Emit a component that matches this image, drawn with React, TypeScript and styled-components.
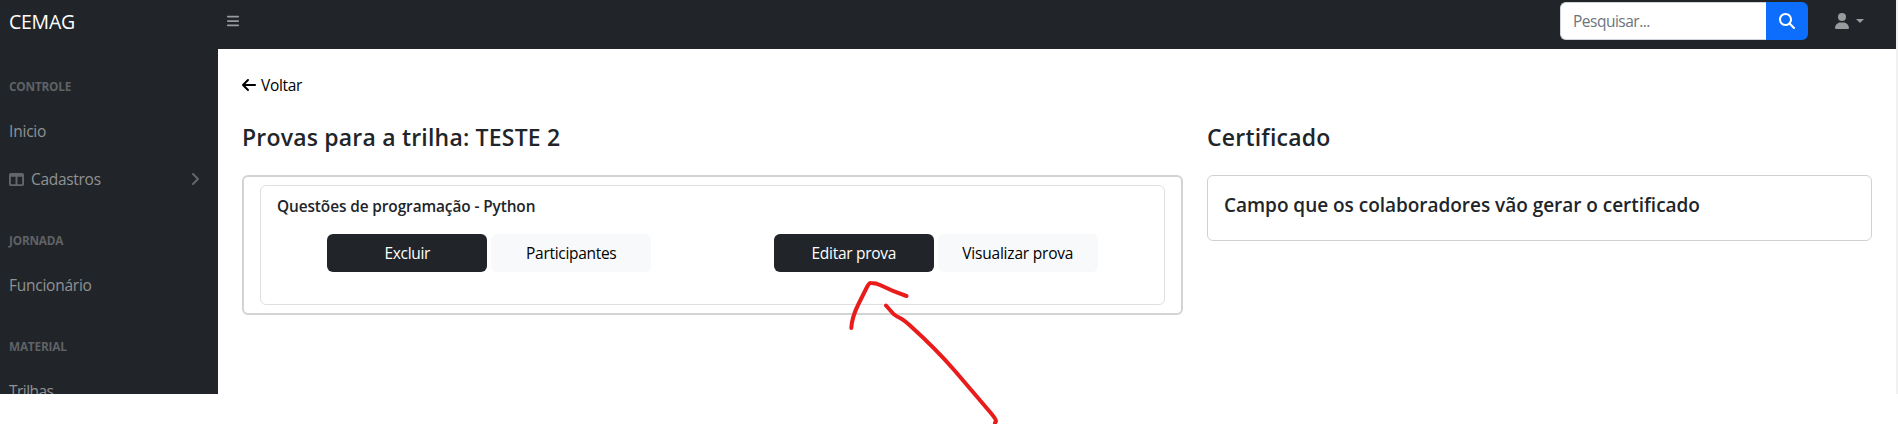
import React from "react";
import styled, { createGlobalStyle } from "styled-components";
import { FaArrowLeft, FaBars, FaTableColumns, FaAngleRight, FaMagnifyingGlass, FaUser } from "react-icons/fa6";

const GlobalStyle = createGlobalStyle`
  *, *::before, *::after { box-sizing: border-box; }
  body {
    margin: 0;
    background: #fff;
    color: #212529;
    font-family: "Open Sans", "Noto Sans", sans-serif;
    font-size: 15.5px;
    line-height: 24px;
    overflow: hidden;
  }
`;

const Page = styled.div`
  position: relative;
  height: 424px;
  overflow: hidden;
`;
const Shell = styled.div`
  display: grid;
  grid-template-columns: 218px 1fr 2px;
  grid-template-rows: 49px 345px;
  height: 394px;
  overflow: hidden;
`;
const TopBar = styled.header`
  grid-column: 1 / 3;
  display: flex;
  align-items: flex-start;
  background: #212529;
`;
const Label = styled.span<{ $track?: number }>`
  letter-spacing: ${(p) => p.$track ?? 0}px;
  white-space: nowrap;
`;
const Brand = styled.div`
  width: 218px;
  padding: 7px 0 0 9px;
  color: #fff;
  font-size: 19.5px;
  line-height: 30px;
`;
const MenuToggle = styled.button`
  display: flex;
  padding: 14px 8px;
  border: 0;
  background: none;
  color: #9a9b9d;
`;
const SearchGroup = styled.form`
  display: flex;
  width: 248px;
  height: 38px;
  margin: 2px 0 0 auto;
`;
const SearchInput = styled.div`
  flex: 1;
  padding: 6px 12px;
  border: 1px solid #ced4da;
  border-right: 0;
  border-radius: 6px 0 0 6px;
  background: #fff;
  color: #6c757d;
`;
const SearchButton = styled.button`
  display: grid;
  place-items: center;
  width: 42px;
  padding: 0;
  border: 0;
  border-radius: 0 6px 6px 0;
  background: #0d6efd;
  color: #fff;
`;
const UserMenu = styled.div`
  display: flex;
  gap: 6px;
  width: 88px;
  padding: 13px 0 0 26px;
  color: #9a9b9d;
`;
const Caret = styled.i`
  width: 0;
  height: 0;
  margin-top: 6px;
  border: 4px solid transparent;
  border-top-color: currentColor;
  border-bottom: 0;
`;
const ScrollTrack = styled.div`
  grid-column: 3;
  grid-row: 1 / 3;
  background: #f1f1f1;
`;
const Sidebar = styled.nav`
  overflow: hidden;
  background: #212529;
  color: #909294;
`;
const SideHeading = styled.div`
  padding: 28px 9px 12px;
  color: #5f6265;
  font-size: 11.8px;
  font-weight: 700;
  line-height: 18px;
`;
const SideLink = styled.div`
  display: flex;
  align-items: center;
  height: 48px;
  padding: 0 15px 0 9px;
  svg { color: #64676a; }
  svg:first-child { margin-right: 7px; }
  svg:last-child { margin-left: auto; }
`;
const Main = styled.main`
  display: grid;
  grid-template-columns: 941px 665px;
  grid-template-rows: 47px 60px auto;
  column-gap: 24px;
  align-items: start;
  padding: 24px 24px 0;
`;
const BackLink = styled.a`
  grid-column: 1 / 3;
  display: flex;
  align-items: center;
  gap: 4px;
  color: #000;
  svg { margin-left: -1px; }
`;
const Title = styled.h4`
  margin: 0;
  padding-top: 3px;
  font-size: 23px;
  font-weight: 600;
  line-height: 29px;
`;
const ExamPanel = styled.section`
  height: 140px;
  margin-top: -5px;
  padding: 8px 16px;
  border: 2px solid #d3d3d4;
  border-radius: 6px;
`;
const ExamCard = styled.article`
  height: 120px;
  border: 1px solid #dedfe0;
  border-radius: 6px;
`;
const ExamName = styled.h6`
  margin: 0;
  padding: 9px 16px 15px;
  font-size: 15.4px;
  font-weight: 600;
  line-height: 24px;
`;
const ActionRow = styled.div`
  display: grid;
  grid-template-columns: 1fr 1fr;
  padding: 0 5px;
`;
const ActionGroup = styled.div`
  display: flex;
  justify-content: center;
  gap: 4px;
`;
const ActionButton = styled.button<{ $dark?: boolean }>`
  width: 160px;
  height: 38px;
  padding: 0;
  border: 0;
  border-radius: 6px;
  background: ${(p) => (p.$dark ? "#212529" : "#f8f9fa")};
  color: ${(p) => (p.$dark ? "#fff" : "#000")};
  font: inherit;
`;
const CertificatePanel = styled.section`
  height: 66px;
  margin-top: -5px;
  padding: 17px 16px;
  border: 1px solid #d0d1d2;
  border-radius: 6px;
  font-size: 19px;
  font-weight: 600;
`;
const Annotation = styled.svg`
  position: absolute;
  top: 270px;
  left: 840px;
  pointer-events: none;
`;

export default function App() {
  return (
    <Page>
      <GlobalStyle />
      <Shell>
        <TopBar>
          <Brand><Label $track={-0.25}>CEMAG</Label></Brand>
          <MenuToggle aria-label="Menu"><FaBars size={14} /></MenuToggle>
          <SearchGroup>
            <SearchInput><Label $track={-0.5}>Pesquisar...</Label></SearchInput>
            <SearchButton type="button" aria-label="Pesquisar"><FaMagnifyingGlass size={16} /></SearchButton>
          </SearchGroup>
          <UserMenu><FaUser size={16} /><Caret /></UserMenu>
        </TopBar>
        <Sidebar>
          <SideHeading><Label $track={-0.2}>CONTROLE</Label></SideHeading>
          <SideLink><Label $track={-0.2}>Inicio</Label></SideLink>
          <SideLink><FaTableColumns size={15} /><Label $track={-0.3}>Cadastros</Label><FaAngleRight size={16} /></SideLink>
          <SideHeading><Label $track={-0.2}>JORNADA</Label></SideHeading>
          <SideLink><Label $track={-0.25}>Funcionário</Label></SideLink>
          <SideHeading><Label $track={-0.2}>MATERIAL</Label></SideHeading>
          <SideLink><Label $track={-0.55}>Trilhas</Label></SideLink>
        </Sidebar>
        <Main>
          <BackLink><FaArrowLeft size={16} /><Label $track={-0.3}>Voltar</Label></BackLink>
          <Title><Label $track={0.2}>Provas para a trilha: TESTE 2</Label></Title>
          <Title><Label $track={0.22}>Certificado</Label></Title>
          <ExamPanel>
            <ExamCard>
              <ExamName><Label $track={-0.1}>Questões de programação - Python</Label></ExamName>
              <ActionRow>
                <ActionGroup>
                  <ActionButton $dark><Label $track={-0.3}>Excluir</Label></ActionButton>
                  <ActionButton><Label $track={-0.3}>Participantes</Label></ActionButton>
                </ActionGroup>
                <ActionGroup>
                  <ActionButton $dark><Label $track={-0.3}>Editar prova</Label></ActionButton>
                  <ActionButton><Label $track={-0.2}>Visualizar prova</Label></ActionButton>
                </ActionGroup>
              </ActionRow>
            </ExamCard>
          </ExamPanel>
          <CertificatePanel><Label $track={-0.03}>Campo que os colaboradores vão gerar o certificado</Label></CertificatePanel>
        </Main>
        <ScrollTrack />
      </Shell>
      <Annotation width="170" height="154" viewBox="840 270 170 154" fill="none" stroke="#e91c1c" strokeWidth="4" strokeLinecap="round" strokeLinejoin="round">
        <path d="M851.3 328 C851.8 318 854.5 312 858.5 304 L867 287 Q869 282.8 871 283 Q876 283 880 285 Q892 291 906.5 296" />
        <path d="M886 305.5 L893.5 314 Q896 316 900 318 Q904 320 910 325.500 Q936 349 955 371 L990 412 Q996 419 996 421 L995 423" />
      </Annotation>
    </Page>
  );
}
